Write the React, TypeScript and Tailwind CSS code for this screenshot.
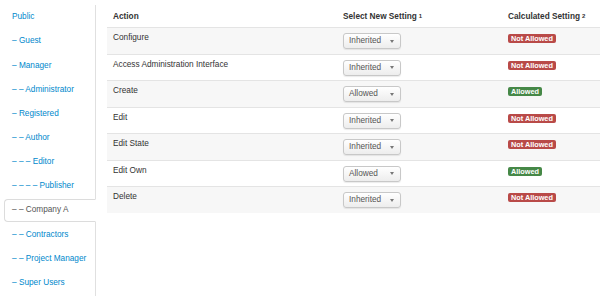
import React from 'react';

const groups = [
  { label: 'Public', level: 0 },
  { label: 'Guest', level: 1 },
  { label: 'Manager', level: 1 },
  { label: 'Administrator', level: 2 },
  { label: 'Registered', level: 1 },
  { label: 'Author', level: 2 },
  { label: 'Editor', level: 3 },
  { label: 'Publisher', level: 4 },
  { label: 'Company A', level: 2, active: true },
  { label: 'Contractors', level: 2 },
  { label: 'Project Manager', level: 2 },
  { label: 'Super Users', level: 1 },
];

const actions = [
  { name: 'Configure', setting: 'Inherited', allowed: false },
  { name: 'Access Administration Interface', setting: 'Inherited', allowed: false },
  { name: 'Create', setting: 'Allowed', allowed: true },
  { name: 'Edit', setting: 'Inherited', allowed: false },
  { name: 'Edit State', setting: 'Inherited', allowed: false },
  { name: 'Edit Own', setting: 'Allowed', allowed: true },
  { name: 'Delete', setting: 'Inherited', allowed: false },
];

const SelectBox = ({ value }: { value: string }) => (
  <div className="w-[58px] h-[16px] border border-[#c8c8c8] rounded-[3px] bg-gradient-to-b from-white to-[#ededed] shadow-[0_1px_1px_rgba(0,0,0,0.08)] flex items-center justify-between pl-[5px] pr-[6px] text-[8.25px] leading-[10px] text-[#555]">
    <span>{value}</span>
    <span className="w-0 h-0 border-l-[2.5px] border-r-[2.5px] border-t-[3px] border-l-transparent border-r-transparent border-t-[#777]" />
  </div>
);

export default function App() {
  return (
    <div className="w-[600px] h-[296px] bg-white flex overflow-hidden font-['Liberation_Sans',Arial,sans-serif] text-[8.25px] text-[#333]">
      {/* Group tabs */}
      <div className="w-[96px] pl-[4px] pt-[5px] flex flex-col">
        <ul className="flex-1 border-r border-[#e0e0e0] pt-[1px]">
          {groups.map((g) => (
            <li key={g.label} className="mb-[1.15px]">
              <a
                className={
                  g.active
                    ? 'mr-[-1px] h-[23px] flex items-center pl-[7px] border border-[#dcdcdc] border-r-transparent rounded-l-[4px] bg-white text-[#555]'
                    : 'mr-[-1px] h-[23px] flex items-center pl-[7px] border border-transparent text-[#0088cc]'
                }
              >
                {g.level > 0 ? Array(g.level).fill('–').join(' ') + ' ' : ''}
                {g.label}
              </a>
            </li>
          ))}
        </ul>
      </div>

      {/* Permissions table */}
      <div className="ml-[11px] flex-1 flex flex-col">
        <div className="h-[27px] flex font-bold leading-[10px] pt-[12px]">
          <div className="w-[231px] pl-[6px]">Action</div>
          <div className="w-[166px] pl-[5px]">
            Select New Setting
            <sup className="text-[6px] font-bold ml-[2px] relative top-[-1.5px]">1</sup>
          </div>
          <div className="flex-1 pl-[4px]">
            Calculated Setting
            <sup className="text-[6px] font-bold ml-[2px] relative top-[-1.5px]">2</sup>
          </div>
        </div>
        {actions.map((a, i) => (
          <div
            key={a.name}
            className={
              'h-[26.57px] flex border-t border-[#e4e4e4] pt-[5px] leading-[10px] ' +
              (i % 2 === 0 ? 'bg-[#f7f7f7]' : 'bg-white')
            }
          >
            <div className="w-[231px] pl-[6px]">{a.name}</div>
            <div className="w-[166px] pl-[5px]">
              <SelectBox value={a.setting} />
            </div>
            <div className="flex-1 pl-[4px] pt-[1px]">
              <span
                className={
                  'inline-block h-[9px] leading-[9px] px-[3px] rounded-[2px] text-white font-bold text-[7.3px] ' +
                  (a.allowed ? 'bg-[#468847]' : 'bg-[#b94a48]')
                }
              >
                {a.allowed ? 'Allowed' : 'Not Allowed'}
              </span>
            </div>
          </div>
        ))}
      </div>
    </div>
  );
}
